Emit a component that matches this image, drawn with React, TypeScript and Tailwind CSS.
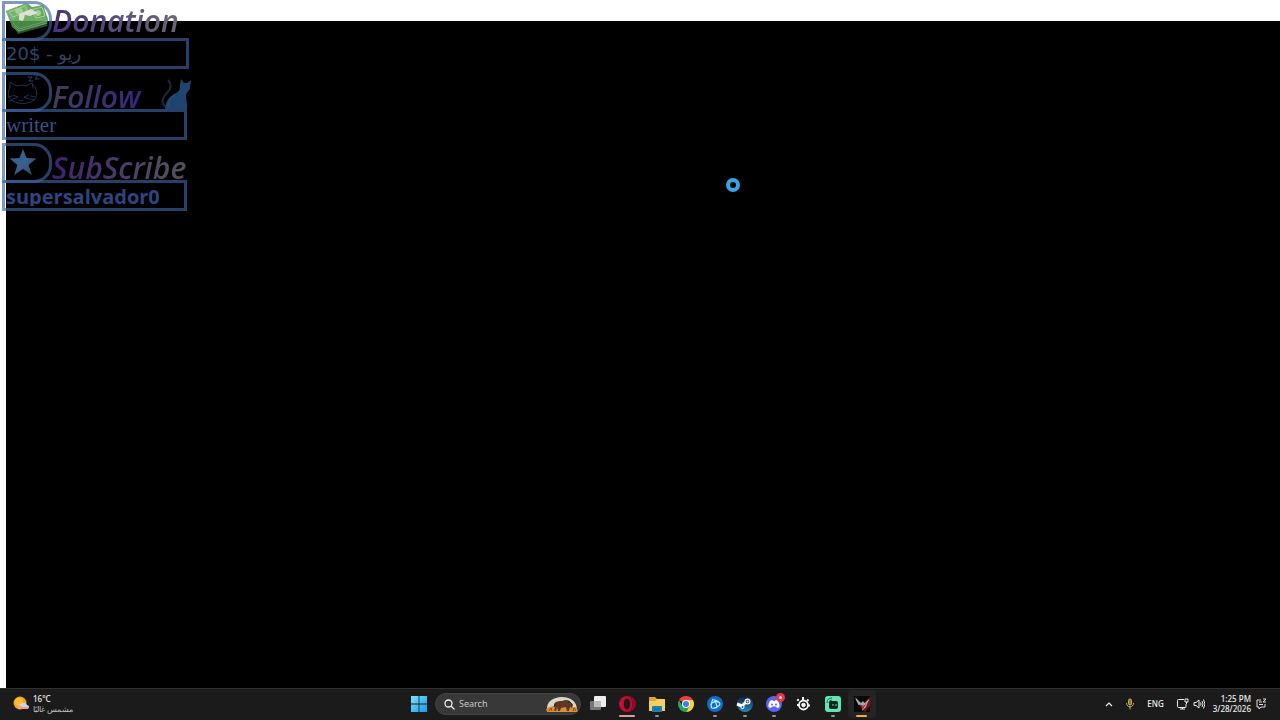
import type { ReactNode } from "react";

type AlertProps = {
  title: string;
  titleClass: string;
  value: string;
  valueClass: string;
  boxClass: string;
  icon: ReactNode;
  extra?: ReactNode;
};

function AlertCard({ title, titleClass, value, valueClass, boxClass, icon, extra }: AlertProps) {
  return (
    <section className="flex flex-col">
      <header className="flex h-[37px] items-end">
        <span className="flex h-10 w-[50px] shrink-0 items-center justify-center self-start rounded-r-[18px] border-[3px] border-[#3c639f]/65">
          {icon}
        </span>
        <h2 className={`bg-clip-text pr-1 text-[30px] font-semibold text-transparent italic leading-8 ${titleClass}`}>{title}</h2>
        {extra}
      </header>
      <p className={`flex h-[31px] items-center overflow-hidden whitespace-nowrap border-[3px] border-[#3c639f]/65 pl-px ${boxClass}`}>
        <span className={valueClass}>{value}</span>
      </p>
    </section>
  );
}

function MoneyIcon() {
  return (
    <svg viewBox="0 0 44 34" className="mb-1 h-[34px] w-[44px] shrink-0 opacity-85">
      <path d="M7 22 25 17 43 18 42 24 13 32Z" fill="#2f642f" />
      <path d="M1 9 22 1 27 5 38 3 43 17 41 22 13 30 7 25Z" fill="#4b984a" />
      <path d="M1 9 22 1 24 9 7 19Z" fill="#5aa858" />
      <path d="m7 19 15-6 21 4v2l-29 8-7-3Z" fill="#55a052" />
      <path d="M4 10 20 4l2 5L8 15ZM26 8l11-3 3 9-9 2Z" fill="none" stroke="#9bc98a" />
      <path d="M8 21 14 27 42 19M9 24 14 29 42 21" fill="none" stroke="#86b879" />
      <ellipse cx="14" cy="9" rx="4" ry="3" fill="#92ca80" />
      <ellipse cx="33" cy="11" rx="3" ry="3" fill="#92ca80" />
      <path d="m14 12 12-5 7 4-8 3-5-1-2 6-4-1Z" fill="#d8dccb" />
    </svg>
  );
}

function SleepyCatIcon() {
  return (
    <svg viewBox="0 0 36 32" className="mr-2 mb-1 h-8 w-9 shrink-0" fill="none" stroke="#1e3158" strokeWidth="1" strokeLinecap="round">
      <path d="M5 13C2 19 3 24 8 27c7 4 18 3 22-2 3-4 2-10-2-15M5 13V8l6 4c3-1 7-1 10 0l6-3 1 5" />
      <path d="m8 21 5 2-5 2M24 21l-5 2 5 2M14 26l2 1 2-1M3 23l4-1M4 27l4-1M26 22l4 1M25 25l4 1" />
      <path d="M23 3h4l-3 4h4M29 1h4l-3 4h4" stroke="#244570" />
    </svg>
  );
}

function StarIcon() {
  return (
    <svg viewBox="0 0 28 26" className="mr-2 mb-0.5 h-[26px] w-7 shrink-0">
      <defs>
        <linearGradient id="star" x1="0" y1="0" x2="1" y2="1">
          <stop offset="0" stopColor="#2d6080" />
          <stop offset=".5" stopColor="#3b6294" />
          <stop offset="1" stopColor="#344658" />
        </linearGradient>
      </defs>
      <path d="m14 0 3.500 9 10 .5-8 6.500L23 26l-9-6-9 6 3.500-10L.5 9.500l10-.5Z" fill="url(#star)" />
    </svg>
  );
}

function SittingCat() {
  return (
    <svg viewBox="0 0 30 32" className="ml-auto h-8 w-[30px] shrink-0">
      <path d="M5 30C-1 26 2 20 6 16c4-4 5-9 1-13" fill="none" stroke="#202836" strokeWidth="2" />
      <path d="M4 32c1-8 4-13 11-16 4-2 4-5 4-8l1-6 3 4h3l4-3-1 8c-1 4-4 4-4 8 0 5 2 9 1 13Z" fill="#20436f" />
      <path d="M14 18c-5 3-7 7-7 12" fill="none" stroke="#2a5078" />
    </svg>
  );
}

function WeatherIcon() {
  return (
    <svg viewBox="0 0 16 16" className="size-4">
      <circle cx="7" cy="7" r="6.500" fill="#f6a31d" />
      <circle cx="6" cy="6" r="4" fill="#ffbd2f" />
      <path d="M8 13a2.500 2.500 0 0 1 0-5 3.500 3.500 0 0 1 6 1 2 2 0 0 1 0 4Z" fill="#c7d7ef" />
      <path d="M8 13a2.500 2.500 0 0 1-2-4c3 2 6 2 9.500 1.500a2 2 0 0 1-1.500 2.500Z" fill="#e9a38c" />
    </svg>
  );
}

function WindowsIcon() {
  return (
    <svg viewBox="0 0 16 16" className="size-4">
      <defs>
        <linearGradient id="win" x1="0" y1="0" x2="1" y2="1">
          <stop stopColor="#79e5fa" />
          <stop offset="1" stopColor="#1698e8" />
        </linearGradient>
      </defs>
      <path d="M0 0h7.600v7.600H0ZM8.400 0H16v7.600H8.400ZM0 8.400h7.600V16H0ZM8.400 8.400H16V16H8.400Z" fill="url(#win)" />
    </svg>
  );
}

function BisonArt() {
  return (
    <svg viewBox="0 0 32 17" className="h-[17px] w-8">
      <path d="M1 14C0 6 7 1 16 1s15 5 15 13Z" fill="#d7d9c4" />
      <path d="M1 12c4-2 8-2 12-1l18 0v5H1Z" fill="#d38d49" />
      <path d="M0 13q4-2 8-1 7 2 14-1 5 0 10 3l-1 2H1Z" fill="#d5942e" />
      <path d="M8 8c2-3 5-3 8-3 4-2 8-1 9 2l2 2-1 3-2-1-1 4h-2l-1-4-5 1-1 3h-2l-1-4-1 4H8l1-4Z" fill="#603626" />
      <path d="M22 6c2 0 4 1 4 3M9 8l-1 3" stroke="#2d211f" fill="none" />
      <path d="m3 15 2-3 1 3M27 15l1-3 2 3" stroke="#9b441d" fill="none" />
    </svg>
  );
}

function TaskView() {
  return (
    <svg viewBox="0 0 18 18" className="size-[18px]">
      <rect x="1" y="6" width="11" height="9" rx="1" fill="#767676" />
      <rect x="5" y="1" width="12" height="11" rx="1" fill="#eee" />
      <path d="M5 6h7v6H5Z" fill="#bcbcbc" />
    </svg>
  );
}

function OperaIcon() {
  return (
    <svg viewBox="0 0 18 18" className="size-[18px]">
      <circle cx="9" cy="9" r="8" fill="#c60c30" />
      <path d="M10 1a8 8 0 0 1 0 16c3-2 4-5 4-8s-1-6-4-8Z" fill="#8e0926" />
      <ellipse cx="9" cy="9" rx="3.200" ry="5.500" fill="#1b1b1b" />
    </svg>
  );
}

function FolderIcon() {
  return (
    <svg viewBox="0 0 18 18" className="size-[18px]">
      <path d="M1 2h6l2 2h8v12H1Z" fill="#dca235" />
      <path d="M1 6h6l2-2h8v12H1Z" fill="#f5cf60" />
      <path d="M4 12q0-1 1-1h8q1 0 1 1v5H4Z" fill="#1b83b0" />
      <path d="M6 14h6" stroke="#0d658f" />
    </svg>
  );
}

function ChromeIcon() {
  return (
    <svg viewBox="0 0 18 18" className="size-[18px]">
      <path d="M9 9 2.070 5A8 8 0 0 1 15.930 5Z" fill="#ed4236" />
      <path d="M9 5h6.930A8 8 0 0 1 9 17l3.500-6Z" fill="#ffcf3b" />
      <path d="M2.070 5 5.500 11 9 13l3.500-2L9 17A8 8 0 0 1 2.070 5Z" fill="#22a65a" />
      <circle cx="9" cy="9" r="4" fill="#fff" />
      <circle cx="9" cy="9" r="3" fill="#3b82e5" />
    </svg>
  );
}

function BattleIcon() {
  return (
    <svg viewBox="0 0 18 18" className="size-[18px]">
      <circle cx="9" cy="9" r="8" fill="#116bc8" />
      <g fill="none" stroke="#b9edff" strokeWidth="1.200" transform="translate(9 9)">
        <path d="M-3-4C-1-5 5-2 5 0S-1 5-3 4-3-3-2-5" />
        <path d="M-4 1C-5-1 0-3 3-2M-1-3C1-2 3 3 1 4" />
      </g>
    </svg>
  );
}

function SteamIcon() {
  return (
    <svg viewBox="0 0 18 18" className="size-[18px]">
      <defs>
        <linearGradient id="steam" x2="0" y2="1">
          <stop stopColor="#101d39" />
          <stop offset="1" stopColor="#218bc2" />
        </linearGradient>
      </defs>
      <circle cx="9" cy="9" r="8" fill="url(#steam)" />
      <path d="m1 9 5 2 4-4" stroke="#fff" strokeWidth="3" fill="none" />
      <circle cx="11.500" cy="6.500" r="3" fill="#fff" />
      <circle cx="11.500" cy="6.500" r="1.700" fill="#203656" />
      <circle cx="11.500" cy="6.500" r="1" fill="#fff" />
      <circle cx="6.500" cy="12" r="2" fill="#fff" />
      <circle cx="6.500" cy="12" r="1" fill="#1b638e" />
    </svg>
  );
}

function DiscordIcon() {
  return (
    <svg viewBox="0 0 22 22" className="size-[22px]">
      <circle cx="11" cy="11" r="8" fill="#5865f2" />
      <path d="M7 8q1-1 2.500-1l.5 1h2l.5-1Q14 7 15 8q2 3 1.500 6-1 1-2.500 1l-1-1.500H9L8 15q-1.500 0-2.500-1Q5 11 7 8Z" fill="#fff" />
      <circle cx="9" cy="11.500" r="1" fill="#5865f2" />
      <circle cx="13" cy="11.500" r="1" fill="#5865f2" />
      <circle cx="17.500" cy="4.500" r="4.500" fill="#e53945" />
      <circle cx="17.500" cy="4.500" r="1.500" fill="#ffd7da" />
    </svg>
  );
}

function SteelSeriesIcon() {
  return (
    <svg viewBox="0 0 18 18" className="size-[18px]" fill="none" stroke="#f4f4f4">
      <circle cx="9.500" cy="10" r="4.500" strokeWidth="1.800" />
      <circle cx="9.500" cy="10" r="1.800" fill="#f4f4f4" />
      <path d="M9 5V2M13 6l1.500-1.500M14 10.500h2M5 10H3" strokeWidth="2" />
      <circle cx="4" cy="5" r=".8" fill="#f4f4f4" />
    </svg>
  );
}

function StreamlabsIcon() {
  return (
    <svg viewBox="0 0 18 18" className="size-[18px]">
      <rect x="1" y="1" width="16" height="16" rx="3" fill="#61e7b2" />
      <path d="M3 8q0-5 5-5M5 8q0-3 3-3" fill="none" stroke="#1a7155" />
      <rect x="5" y="6" width="9" height="8" rx="2" fill="#09241e" />
      <path d="M9 9v2M12 9v2" stroke="#61e7b2" />
    </svg>
  );
}

function GameIcon() {
  return (
    <svg viewBox="0 0 18 18" className="size-[18px]">
      <path d="M1 1h16v16H1Z" fill="#080809" />
      <path d="m10 9 7-7v9l-5 6-4-4Z" fill="#7b1220" />
      <path d="m2 2 6 6 2-2 2 3 4-5-3 8-4 4 1-5-4-1Z" fill="#9aaaa8" />
      <path d="m6 9 4 2 3-2-3 5Z" fill="#c31f33" />
      <path d="m3 4 3 6m5-1 5-4" stroke="#e7c8c6" strokeWidth=".7" />
    </svg>
  );
}

const apps = [
  { name: "Task View", icon: <TaskView />, mark: "" },
  { name: "Opera", icon: <OperaIcon />, mark: "w-4 bg-[#e596a7]" },
  { name: "File Explorer", icon: <FolderIcon />, mark: "w-1 bg-[#929292]" },
  { name: "Chrome", icon: <ChromeIcon />, mark: "" },
  { name: "Battle.net", icon: <BattleIcon />, mark: "w-1 bg-[#929292]" },
  { name: "Steam", icon: <SteamIcon />, mark: "w-1 bg-[#929292]" },
  { name: "Discord", icon: <DiscordIcon />, mark: "w-1 bg-[#929292]" },
  { name: "SteelSeries", icon: <SteelSeriesIcon />, mark: "" },
  { name: "Streamlabs", icon: <StreamlabsIcon />, mark: "w-1 bg-[#929292]" },
  { name: "Game", icon: <GameIcon />, mark: "w-[11px] bg-[#e9ad49]" },
];

function Taskbar() {
  return (
    <footer className="grid h-8 shrink-0 grid-cols-[1fr_auto_1fr] items-center border-t border-[#303030] bg-[#1b1b1b] text-[#eee] font-['Noto_Sans',sans-serif]">
      <button aria-label="Weather" className="flex items-center gap-1 justify-self-start pb-0.5 pl-[13px] text-left">
        <WeatherIcon />
        <span className="flex flex-col text-[8px] font-medium leading-[10px]">
          <span>16°C</span>
          <span className="text-[#bdbdbd]" dir="rtl">مشمس غالبًا</span>
        </span>
      </button>

      <div className="flex items-center pb-px pl-[7px]">
        <button aria-label="Start" className="mr-2"><WindowsIcon /></button>
        <label className="flex h-[22px] w-[146px] items-center gap-1 rounded-full border border-[#444] bg-[#383838] pr-0.5 pl-2">
          <svg viewBox="0 0 11 11" className="size-[11px] shrink-0" fill="none" stroke="#eee" strokeWidth="1.300">
            <circle cx="4.500" cy="4.500" r="3.500" />
            <path d="m7 7 3.500 3.500" />
          </svg>
          <input aria-label="Search" placeholder="Search" className="min-w-0 flex-1 bg-transparent text-[9px] leading-4 outline-none placeholder:text-[#c8c8c8]" />
          <BisonArt />
        </label>
        <nav className="ml-[3px] flex w-[292px] justify-between">
          {apps.map((app) => (
            <button
              key={app.name}
              aria-label={app.name}
              className={`relative flex h-7 w-7 items-center justify-center rounded ${app.name === "Game" ? "bg-[#242424]" : ""}`}
            >
              {app.icon}
              {app.mark && <span className={`absolute bottom-px h-0.5 rounded-full ${app.mark}`} />}
            </button>
          ))}
        </nav>
      </div>

      <div className="flex items-center justify-self-end pr-[13px] pb-px text-[8px] font-medium leading-[10px]">
        <button aria-label="Show hidden icons" className="mr-3">
          <svg viewBox="0 0 8 6" className="h-1.5 w-2" fill="none" stroke="#eee" strokeWidth="1.200"><path d="m1 5 3-3 3 3" /></svg>
        </button>
        <button aria-label="Microphone" className="mr-3">
          <svg viewBox="0 0 10 12" className="h-3 w-2.5" fill="none" stroke="#cbb354">
            <rect x="3.500" y="1" width="3" height="6" rx="1.500" fill="#8b7730" />
            <path d="M1.500 5c0 5 7 5 7 0M5 9v2.500" />
          </svg>
        </button>
        <button className="mr-3">ENG</button>
        <button aria-label="Network and volume" className="mr-2 flex gap-1">
          <svg viewBox="0 0 13 12" className="h-3 w-[13px]" fill="none" stroke="#eee">
            <path d="M8 1.500H2.500q-1 0-1 1v6q0 1 1 1H9q1 0 1-1V6M4 11h5M6.500 9.500V11M9 1h3v3H9ZM10.500 4v2" />
          </svg>
          <svg viewBox="0 0 12 12" className="size-3" fill="none" stroke="#eee">
            <path d="M1 4.500h2L6 2v8L3 7.500H1ZM7.500 4.500q1 1.500 0 3M9 3q2 3 0 6M10.500 1.500q3 4.500 0 9" />
          </svg>
        </button>
        <time dateTime="2026-03-28T13:25" className="mr-1 flex flex-col text-right">
          <span>1:25 PM</span>
          <span>3/28/2026</span>
        </time>
        <button aria-label="Notifications">
          <svg viewBox="0 0 12 12" className="size-3" fill="none" stroke="#ddd">
            <path d="M6 2H2v7h2v2l2-2h4V6M4 4h3M4 6.500h4M8 1h3L8 4h3" />
          </svg>
        </button>
      </div>
    </footer>
  );
}

export default function App() {
  return (
    <div className="flex h-screen flex-col overflow-hidden bg-white font-['Open_Sans','Noto_Sans',sans-serif]">
      <main className="relative flex min-h-0 flex-1 pt-[21px] pl-1.5">
        <div className="flex-1 bg-black" />
        <aside className="absolute top-px left-0.5 flex w-[189px] flex-col gap-[3px]">
          <AlertCard
            title="Donation"
            titleClass="mb-px bg-linear-to-r from-[#48327f] to-[#6d6973]"
            value="20$ - ريو"
            valueClass="pt-px text-[18px] leading-6 text-[#2c4765] font-['DejaVu_Sans',sans-serif]"
            boxClass="w-[187px]"
            icon={<MoneyIcon />}
          />
          <AlertCard
            title="Follow"
            titleClass="-mb-1 bg-linear-to-r from-[#403d5a] to-[#3a2380]"
            value="writer"
            valueClass="text-[21px] leading-6 text-[#3a5086] font-['Liberation_Serif',serif]"
            boxClass="w-[185px]"
            icon={<SleepyCatIcon />}
            extra={<SittingCat />}
          />
          <AlertCard
            title="SubScribe"
            titleClass="-mb-1 bg-linear-to-r from-[#3f2070] to-[#55535a]"
            value="supersalvador0"
            valueClass="h-[21px] overflow-hidden text-[20px] leading-6 font-bold text-[#30457f] font-['Open_Sans',sans-serif]"
            boxClass="w-[185px]"
            icon={<StarIcon />}
          />
        </aside>
        <span role="status" aria-label="Loading" className="absolute top-[178px] left-[56.7%] size-3.5 rounded-full border-4 border-[#36a5e8]" />
      </main>
      <Taskbar />
    </div>
  );
}
